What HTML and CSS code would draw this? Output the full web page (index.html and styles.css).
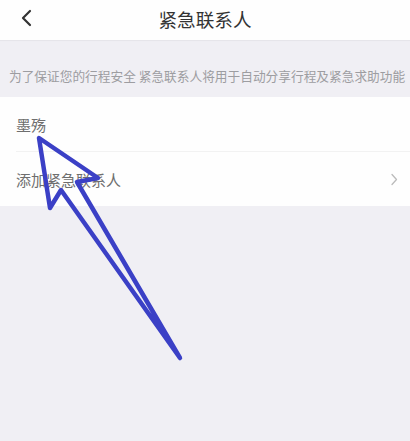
FILE: index.html
```html
<!DOCTYPE html>
<html lang="zh">
<head>
<meta charset="utf-8">
<link rel="stylesheet" href="styles.css">
</head>
<body>
<div class="page">
  <header class="topbar">
    <svg class="back" width="12" height="18" viewBox="0 0 12 18"><polyline points="10,2 3,9 10,16" fill="none" stroke="#333" stroke-width="2.2" stroke-linecap="round" stroke-linejoin="round"/></svg>
    <h1 class="title">紧急联系人</h1>
  </header>
  <p class="notice">为了保证您的行程安全 紧急联系人将用于自动分享行程及紧急求助功能</p>
  <ul class="list">
    <li class="row">墨殇</li>
    <li class="row">添加紧急联系人
      <svg class="chev" width="8" height="13" viewBox="0 0 8 13"><polyline points="2,1.5 6.5,6.5 2,11.5" fill="none" stroke="#bbb" stroke-width="1.3" stroke-linecap="round" stroke-linejoin="round"/></svg>
    </li>
  </ul>
  <svg class="arrow" width="410" height="441" viewBox="0 0 410 441">
    <polygon points="39,138 50,208 61,190 180,358 77,182 98,178" fill="none" stroke="#3b40c6" stroke-width="4.5" stroke-linejoin="round" stroke-linecap="round"/>
  </svg>
</div>
</body>
</html>
```
FILE: styles.css
```css
html, body {
  margin: 0;
  padding: 0;
  background: #f0eff4;
}
.page {
  position: relative;
  width: 410px;
  height: 441px;
  overflow: hidden;
  font-family: "Noto Sans CJK SC", "Noto Sans", sans-serif;
  background: #f0eff4;
}
.topbar {
  height: 40px;
  background: #fefefe;
  display: flex;
  align-items: center;
  justify-content: center;
  position: relative;
  box-shadow: 0 1px 1px rgba(0,0,0,0.04);
}
.back {
  position: absolute;
  left: 20px;
  top: 9px;
}
.title {
  margin: 0;
  font-size: 18.6px;
  font-weight: 400;
  color: #333;
  line-height: 1;
  margin-top: -2px;
}
.notice {
  margin: 0;
  height: 57px;
  box-sizing: border-box;
  padding: 28px 0 0 9px;
  font-size: 12.7px;
  line-height: 16px;
  color: #9d9da1;
  white-space: nowrap;
}
.list {
  list-style: none;
  margin: 0;
  padding: 0 0 0 16px;
  background: #fefefe;
}
.row {
  height: 54px;
  display: flex;
  align-items: center;
  font-size: 15px;
  color: #6e6e6e;
  position: relative;
  padding-right: 12px;
}
.row + .row {
  border-top: 1px solid #f2f2f2;
}
.chev {
  margin-left: auto;
}
.arrow {
  position: absolute;
  left: 0;
  top: 0;
}
```
